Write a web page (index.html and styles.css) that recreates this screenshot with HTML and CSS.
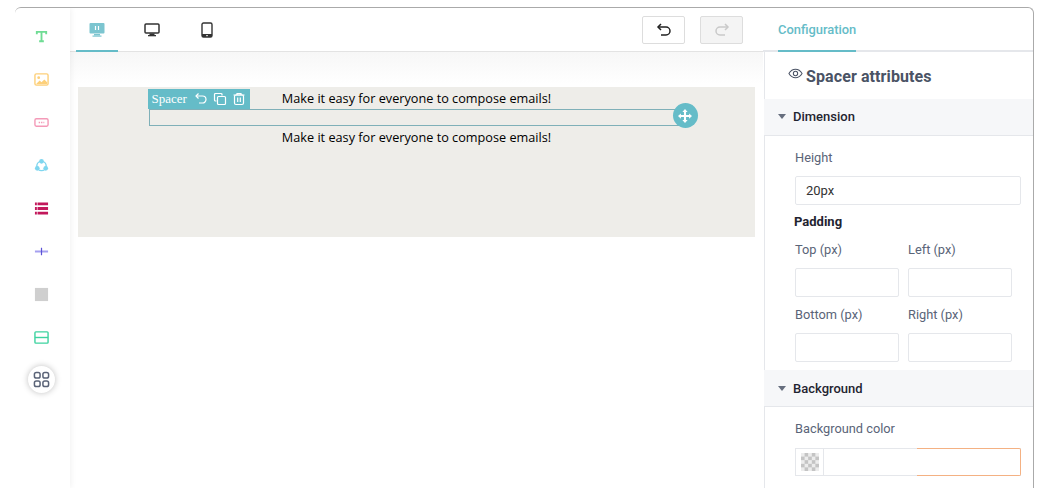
FILE: index.html

```html
<!DOCTYPE html>
<html lang="en">
<head>
  <meta charset="UTF-8" />
  <meta name="viewport" content="width=device-width, initial-scale=1.0"/>
  <title>Email Editor</title>
  <link rel="stylesheet" href="styles.css">
</head>
<body>
  <div class="frame">
    <!-- Block palette -->
    <aside class="palette">
      <svg class="block-icon" viewBox="0 0 16 16"><path d="M3 5.500V3h10v2.500M8 3v10M5.500 13h5" fill="none" stroke="#6fdc94" stroke-width="2"/></svg>
      <svg class="block-icon" viewBox="0 0 16 16"><rect x="1" y="2" width="14" height="12" rx="1.500" fill="#fff" stroke="#fdd07a" stroke-width="1.500"/><circle cx="5" cy="6" r="1.500" fill="#fdd07a"/><path d="M2 13l4-4 2 2 3-3 3 3v2z" fill="#fdd07a"/></svg>
      <svg class="block-icon" viewBox="0 0 16 16"><rect x="1" y="4" width="14" height="8" rx="1.500" fill="#fff" stroke="#f49ab8" stroke-width="1.500"/><path d="M5 8h6" stroke="#f49ab8" stroke-width="1.500" stroke-dasharray="1.500 1"/></svg>
      <svg class="block-icon" viewBox="0 0 16 16"><circle cx="8" cy="8.500" r="5" fill="none" stroke="#7fd6ef" stroke-width="1.500"/><circle cx="8" cy="3.500" r="2.500" fill="#7fd6ef"/><circle cx="3.500" cy="11" r="2.500" fill="#7fd6ef"/><circle cx="12.500" cy="11" r="2.500" fill="#7fd6ef"/></svg>
      <svg class="block-icon" viewBox="0 0 16 16"><path d="M1 3h14M1 8h14M1 13h14" stroke="#c2185b" stroke-width="3"/><path d="M3.500 1v14" stroke="#fff" stroke-width=".7"/></svg>
      <svg class="block-icon" viewBox="0 0 16 16"><path d="M1 8h14" stroke="#a5a0f0" stroke-width="2"/><path d="M8 4v8" stroke="#5b52d6" stroke-width="1.300"/></svg>
      <svg class="block-icon" viewBox="0 0 16 16"><rect x="1" y="1" width="14" height="14" fill="#cfcfcf"/></svg>
      <svg class="block-icon" viewBox="0 0 16 16"><rect x="1" y="2" width="14" height="12" rx="1" fill="#fff" stroke="#3ed3a0" stroke-width="1.500"/><path d="M1 8h14" stroke="#3ed3a0" stroke-width="1.500"/></svg>
      <button class="more-btn">
        <svg viewBox="0 0 18 18" width="17" height="17" fill="none" stroke="#5b6478" stroke-width="1.600"><rect x="1.500" y="1.500" width="6" height="6" rx="2"/><rect x="10.500" y="1.500" width="6" height="6" rx="2"/><rect x="1.500" y="10.500" width="6" height="6" rx="2"/><rect x="10.500" y="10.500" width="6" height="6" rx="2"/></svg>
      </button>
    </aside>

    <!-- Editor -->
    <main class="editor">
      <div class="toolbar">
        <div class="device-tabs">
          <a class="device-tab active" href="#">
            <svg viewBox="0 0 16 16" width="16" height="16"><rect x="0.500" y="1" width="15" height="10.500" rx="1" fill="#7cc5d0"/><rect x="5" y="12" width="6" height="1.500" fill="#7cc5d0"/><rect x="3.500" y="13.500" width="9" height="1.200" fill="#7cc5d0"/><path d="M6.500 4v4M9.500 4v4" stroke="#fff" stroke-width="1.200"/></svg>
          </a>
          <a class="device-tab" href="#">
            <svg viewBox="0 0 16 16" width="16" height="16"><rect x="1" y="2" width="14" height="9" rx="1" fill="none" stroke="#333" stroke-width="1.500"/><rect x="5.500" y="11.500" width="5" height="1.500" fill="#333"/><rect x="4" y="13" width="8" height="1.300" fill="#333"/></svg>
          </a>
          <a class="device-tab" href="#">
            <svg viewBox="0 0 16 16" width="16" height="16"><rect x="3" y="1" width="10" height="14" rx="1.500" fill="none" stroke="#333" stroke-width="1.400"/><rect x="3" y="12" width="10" height="3" fill="#333"/><rect x="7.300" y="13" width="1.400" height="1.200" fill="#fff"/></svg>
          </a>
        </div>
        <div class="history">
          <button class="history-btn">
            <svg viewBox="0 0 16 16" width="16" height="16" fill="none" stroke="#222" stroke-width="1.500"><path d="M5 2L2 5l3 3"/><path d="M2 5h8a3.500 3.500 0 0 1 0 8H5"/></svg>
          </button>
          <button class="history-btn disabled">
            <svg viewBox="0 0 16 16" width="16" height="16" fill="none" stroke="#c9c9c9" stroke-width="1.500"><path d="M11 2l3 3-3 3"/><path d="M14 5H6a3.500 3.500 0 0 0 0 8h5"/></svg>
          </button>
        </div>
      </div>

      <div class="canvas">
        <section class="mail-section">
          <div class="mail-body">
            <p class="mail-text">Make it easy for everyone to compose emails!</p>
            <div class="spacer-block">
              <div class="spacer-tools">
                <span class="spacer-name">Spacer</span>
                <svg viewBox="0 0 14 14" width="14" height="14" fill="none" stroke="#fff" stroke-width="1.200"><path d="M4.500 1.500L2 4l2.500 2.500"/><path d="M2 4h6.500a3.500 3.500 0 0 1 0 7H5"/></svg>
                <svg viewBox="0 0 14 14" width="14" height="14" fill="none" stroke="#fff" stroke-width="1.200"><path d="M9 3.500V2.500a1 1 0 0 0-1-1H2.500a1 1 0 0 0-1 1V8a1 1 0 0 0 1 1h1"/><rect x="4.500" y="4.500" width="8" height="8" rx="1"/></svg>
                <svg viewBox="0 0 14 14" width="14" height="14" fill="none" stroke="#fff" stroke-width="1.200"><path d="M1.500 3h11M5 3V1.500h4V3"/><rect x="2.500" y="3" width="9" height="9.500" rx="1.500"/><path d="M5.700 5.500v4.500M8.300 5.500v4.500"/></svg>
              </div>
              <div class="move-handle">
                <svg viewBox="0 0 16 16" width="14" height="14" fill="#fff"><path d="M8 0l3 3.300H9.200v3.500h3.500V5l3.300 3-3.300 3V9.200H9.200v3.500H11L8 16l-3-3.300h1.800V9.200H3.300V11L0 8l3.300-3v1.800h3.500V3.300H5z"/></svg>
              </div>
            </div>
            <p class="mail-text second">Make it easy for everyone to compose emails!</p>
          </div>
        </section>
      </div>
    </main>

    <!-- Attribute panel -->
    <aside class="config">
      <div class="config-tabs">
        <a class="config-tab" href="#">Configuration</a>
      </div>
      <div class="config-body">
        <h2 class="config-title">
          <svg viewBox="0 0 16 16" width="15" height="15" fill="none" stroke="#4a5365" stroke-width="1.100"><path d="M1 8c1.800-3 4.200-4.500 7-4.500S13.200 5 15 8c-1.800 3-4.200 4.500-7 4.500S2.800 11 1 8z"/><circle cx="8" cy="8" r="2.300"/></svg>
          <span>Spacer attributes</span>
        </h2>

        <div class="group-head first"><i class="caret"></i>Dimension</div>
        <div class="group-body">
          <label class="field-label">Height</label>
          <input class="text-input wide" type="text" value="20px">
          <div class="sub-title">Padding</div>
          <div class="field-grid">
            <div><label class="field-label">Top (px)</label><input class="text-input" type="text"></div>
            <div><label class="field-label">Left (px)</label><input class="text-input" type="text"></div>
            <div><label class="field-label">Bottom (px)</label><input class="text-input" type="text"></div>
            <div><label class="field-label">Right (px)</label><input class="text-input" type="text"></div>
          </div>
        </div>

        <div class="group-head"><i class="caret"></i>Background</div>
        <div class="group-body">
          <label class="field-label">Background color</label>
          <div class="color-field">
            <span class="swatch"><i class="checker"></i></span>
            <span class="color-input"></span>
            <span class="color-focus"></span>
          </div>
        </div>
      </div>
    </aside>
  </div>
</body>
</html>
```

FILE: styles.css

```css
:root {
  --accent: #65bcc8;
  --line: #e5e7eb;
  --label: #5a6478;
  --head-bg: #f6f7f9;
}

* {
  box-sizing: border-box;
}

html, body {
  height: 100%;
}

body {
  margin: 0;
  background: #fff;
  font-family: Roboto, "Liberation Sans", sans-serif;
  overflow: hidden;
}

.frame {
  display: flex;
  height: 481px;
  width: 1019px;
  margin: 7px 0 0 15px;
  border-top: 1px solid #aaa;
  border-right: 1px solid #aaa;
  border-top-left-radius: 6px;
  border-top-right-radius: 6px;
  overflow: hidden;
}

/* Block palette */
.palette {
  width: 55px;
  flex: none;
  display: flex;
  flex-direction: column;
  align-items: center;
  padding: 21px 3px 0 0;
  gap: 28px;
  box-shadow: 1px 0 6px rgba(0, 0, 0, 0.06);
  position: relative;
  z-index: 2;
}

.block-icon {
  width: 15px;
  height: 15px;
  flex: none;
}

.more-btn {
  width: 27px;
  height: 27px;
  margin-top: -7px;
  padding: 0;
  border: none;
  border-radius: 50%;
  background: #fff;
  box-shadow: 0 0 6px rgba(0, 0, 0, 0.25);
  display: flex;
  align-items: center;
  justify-content: center;
}

/* Editor */
.editor {
  width: 693px;
  flex: none;
  display: flex;
  flex-direction: column;
}

.toolbar {
  height: 44px;
  flex: none;
  display: flex;
  justify-content: space-between;
  align-items: center;
  padding: 0 20px 0 6px;
  border-bottom: 1px solid #e3e3e3;
}

.device-tabs {
  display: flex;
  height: 100%;
  gap: 13px;
}

.device-tab {
  width: 42px;
  display: flex;
  align-items: center;
  justify-content: center;
  padding-top: 2px;
  border-bottom: 2px solid transparent;
  margin-bottom: -1px;
}

.device-tab.active {
  border-bottom-color: var(--accent);
}

.history {
  display: flex;
  gap: 15px;
}

.history-btn {
  width: 43px;
  height: 28px;
  padding: 0;
  background: #fff;
  border: 1px solid #ddd;
  border-radius: 2px;
  display: flex;
  align-items: center;
  justify-content: center;
}

.history-btn.disabled {
  background: #f4f4f4;
}

.canvas {
  flex: 1;
  padding: 35px 8px 0;
  background: linear-gradient(#f7f7f7, #fff 32px);
}

.mail-section {
  height: 150px;
  background: #eeede9;
}

.mail-body {
  width: 536px;
  margin: 0 auto;
  padding-top: 2px;
}

.mail-text {
  margin: 0;
  height: 20px;
  line-height: 19px;
  font-family: "Open Sans", sans-serif;
  font-size: 12.700px;
  text-align: center;
  color: #000;
}

.mail-text.second {
  margin-top: 2px;
}

.spacer-block {
  position: relative;
  height: 17px;
  border: 1px solid #7fb0b8;
}

.spacer-tools {
  position: absolute;
  left: -2px;
  bottom: 16px;
  width: 102px;
  height: 20px;
  display: flex;
  align-items: center;
  gap: 5px;
  padding-left: 4px;
  background: var(--accent);
}

.spacer-name {
  font-family: "Liberation Serif", serif;
  font-size: 13px;
  color: #fff;
  margin-right: 2px;
}

.move-handle {
  position: absolute;
  right: -14px;
  top: -7px;
  width: 25px;
  height: 25px;
  border-radius: 50%;
  background: var(--accent);
  display: flex;
  align-items: center;
  justify-content: center;
}

/* Attribute panel */
.config {
  flex: 1;
  min-width: 0;
  display: flex;
  flex-direction: column;
}

.config-tabs {
  height: 44px;
  flex: none;
  padding-left: 15px;
  border-bottom: 2px solid var(--line);
  display: flex;
}

.config-tab {
  display: flex;
  align-items: center;
  height: 44px;
  padding-top: 1px;
  border-bottom: 2px solid var(--accent);
  font-size: 12.900px;
  font-weight: 500;
  color: var(--accent);
  text-decoration: none;
}

.config-body {
  flex: 1;
  border-left: 1px solid var(--line);
  margin-left: 1px;
}

.config-title {
  height: 47px;
  margin: 0;
  padding: 1px 0 0 23px;
  display: flex;
  align-items: center;
  gap: 3px;
  font-size: 16px;
  font-weight: 700;
  letter-spacing: 0.1px;
  color: #4a5365;
}

.config-title svg {
  margin-top: -5px;
}

.group-head {
  height: 37px;
  margin-left: -1px;
  padding-left: 14px;
  display: flex;
  align-items: center;
  gap: 7px;
  background: var(--head-bg);
  border-bottom: 1px solid var(--line);
  font-size: 13px;
  font-weight: 500;
  color: #1f2430;
}

.group-head.first {
  padding-bottom: 2px;
}

.caret {
  width: 0;
  height: 0;
  border-left: 4px solid transparent;
  border-right: 4px solid transparent;
  border-top: 5px solid #666e7e;
}

.group-body {
  padding: 14px 12px 0 30px;
}

.group-body + .group-head {
  margin-top: 8px;
}

.field-label {
  display: block;
  height: 16px;
  line-height: 16px;
  font-size: 12.800px;
  color: var(--label);
  margin-bottom: 10px;
}

.text-input {
  display: block;
  width: 104px;
  height: 29px;
  padding: 0 10px;
  background: #fff;
  border: 1px solid var(--line);
  border-radius: 2px;
  font-family: Roboto, sans-serif;
  font-size: 13px;
  color: #333;
}

.text-input.wide {
  width: 226px;
}

.sub-title {
  margin-top: 9px;
  margin-left: -1px;
  height: 16px;
  line-height: 16px;
  font-size: 13px;
  font-weight: 700;
  color: #1f2430;
}

.field-grid {
  display: grid;
  grid-template-columns: 104px 104px;
  column-gap: 9px;
  row-gap: 10px;
  margin-top: 12px;
}

.color-field {
  position: relative;
  display: flex;
  width: 226px;
  height: 28px;
  margin-top: 11px;
}

.swatch {
  width: 29px;
  flex: none;
  display: flex;
  align-items: center;
  justify-content: center;
  border: 1px solid var(--line);
}

.checker {
  width: 18px;
  height: 18px;
  background: repeating-conic-gradient(#c4c4c4 0 25%, #ececec 0 50%) 0 0 / 7.200px 7.200px;
}

.color-input {
  flex: 1;
  border: 1px solid var(--line);
  border-left: none;
}

.color-focus {
  position: absolute;
  right: 0;
  top: 0;
  width: 104px;
  height: 28px;
  border: 1px solid #f4b183;
  border-left: none;
  border-radius: 0 2px 2px 0;
}
```
